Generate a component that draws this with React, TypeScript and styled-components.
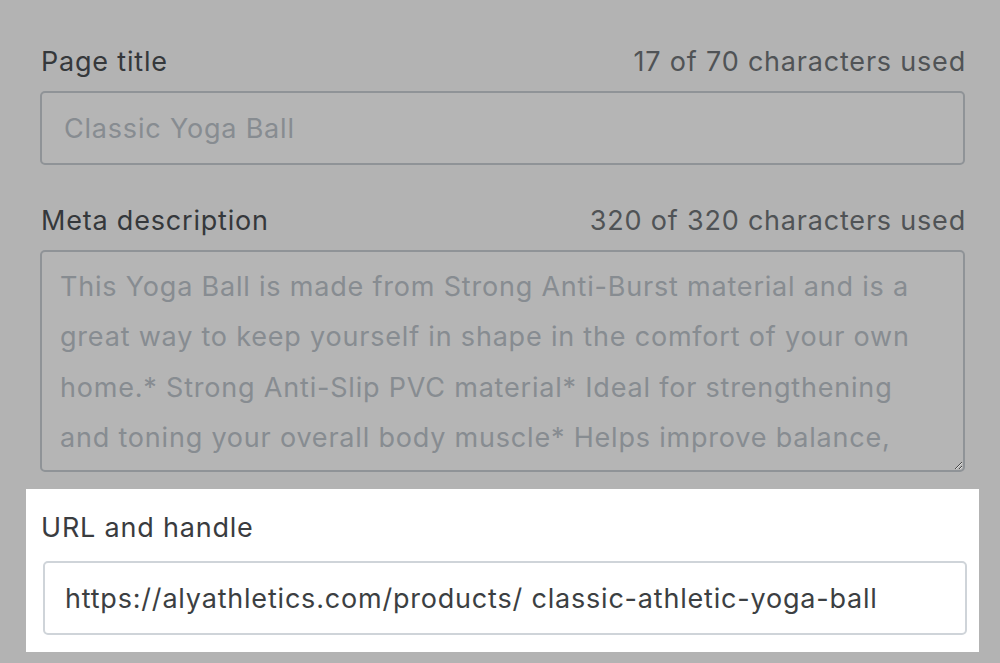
import React from "react";
import styled, { createGlobalStyle } from "styled-components";

const GlobalStyle = createGlobalStyle`
    html, body {
        margin: 0;
        padding: 0;
        background: #b3b3b3;
    }
    body {
        font-family: Inter, "Noto Sans", "Liberation Sans", sans-serif;
        -webkit-font-smoothing: antialiased;
    }
`;

const META =
    "This Yoga Ball is made from Strong Anti-Burst material and is a\n" +
    "great way to keep yourself in shape in the comfort of your own\n" +
    "home.* Strong Anti-Slip PVC material* Ideal for strengthening\n" +
    "and toning your overall body muscle* Helps improve balance,\n" +
    "posture and core stability* Suitable for yoga, pilates, aerobics\n" +
    "and physical therapy* Comes with a foot pump for easy inflation";

export default function App() {
    return (
        <>
            <GlobalStyle />
            <Page>
                <Fields>
                    <Field>
                        <LabelRow>
                            <Label>Page title</Label>
                            <Counter>17 of 70 characters used</Counter>
                        </LabelRow>
                        <TextInput readOnly value="Classic Yoga Ball" />
                    </Field>
                    <Field>
                        <LabelRow>
                            <Label>Meta description</Label>
                            <Counter>320 of 320 characters used</Counter>
                        </LabelRow>
                        <TextArea readOnly value={META} />
                    </Field>
                </Fields>
                <Highlight>
                    <LabelRow>
                        <Label bright>URL and handle</Label>
                    </LabelRow>
                    <UrlInput readOnly value="https://alyathletics.com/products/ classic-athletic-yoga-ball" />
                </Highlight>
            </Page>
        </>
    );
}

const Page = styled.div`
    width: 1000px;
    height: 663px;
    padding-top: 47px;
    box-sizing: border-box;
    display: flex;
    flex-direction: column;
`;

const Fields = styled.div`
    margin-left: 40px;
    width: 925px;
    display: flex;
    flex-direction: column;
    gap: 41px;
`;

const Field = styled.div`
    display: flex;
    flex-direction: column;
    gap: 14px;
`;

const LabelRow = styled.div`
    display: flex;
    justify-content: space-between;
    align-items: center;
    height: 30px;
    font-size: 27px;
    line-height: 30px;
    letter-spacing: 0.8px;
`;

const Label = styled.span<{ bright?: boolean }>`
    color: ${props => (props.bright ? "#3a3c3f" : "#35383b")};
    padding-left: 1px;
`;

const Counter = styled.span`
    color: #505356;
    margin-right: -1px;
`;

const TextInput = styled.input`
    box-sizing: border-box;
    width: 100%;
    height: 74px;
    margin: 0;
    padding: 0 22px;
    border: 2px solid #8f9397;
    border-radius: 5px;
    background: #b5b5b5;
    font-family: inherit;
    font-size: 27px;
    letter-spacing: 0.8px;
    color: #878c91;
    outline: none;
`;

const TextArea = styled.textarea`
    box-sizing: border-box;
    display: block;
    width: 100%;
    height: 222px;
    margin: 0;
    padding: 10px 18px 0 18px;
    border: 2px solid #8f9397;
    border-radius: 5px;
    background: #b5b5b5;
    font-family: inherit;
    font-size: 27px;
    letter-spacing: 0.8px;
    line-height: 50.3px;
    color: #878c91;
    white-space: pre;
    overflow: hidden;
    resize: vertical;
    outline: none;
`;

const Highlight = styled.div`
    margin: 17px 0 0 26px;
    width: 953px;
    height: 163px;
    box-sizing: border-box;
    padding: 24px 12px 0 14px;
    background: #ffffff;
    display: flex;
    flex-direction: column;
    gap: 18px;
`;

const UrlInput = styled.input`
    box-sizing: border-box;
    width: calc(100% - 3px);
    height: 74px;
    margin: 0 0 0 3px;
    padding: 0 20px;
    border: 2px solid #cfd4d9;
    border-radius: 5px;
    background: #ffffff;
    font-family: inherit;
    font-size: 27px;
    letter-spacing: 0.8px;
    color: #3c3f42;
    outline: none;
`;
